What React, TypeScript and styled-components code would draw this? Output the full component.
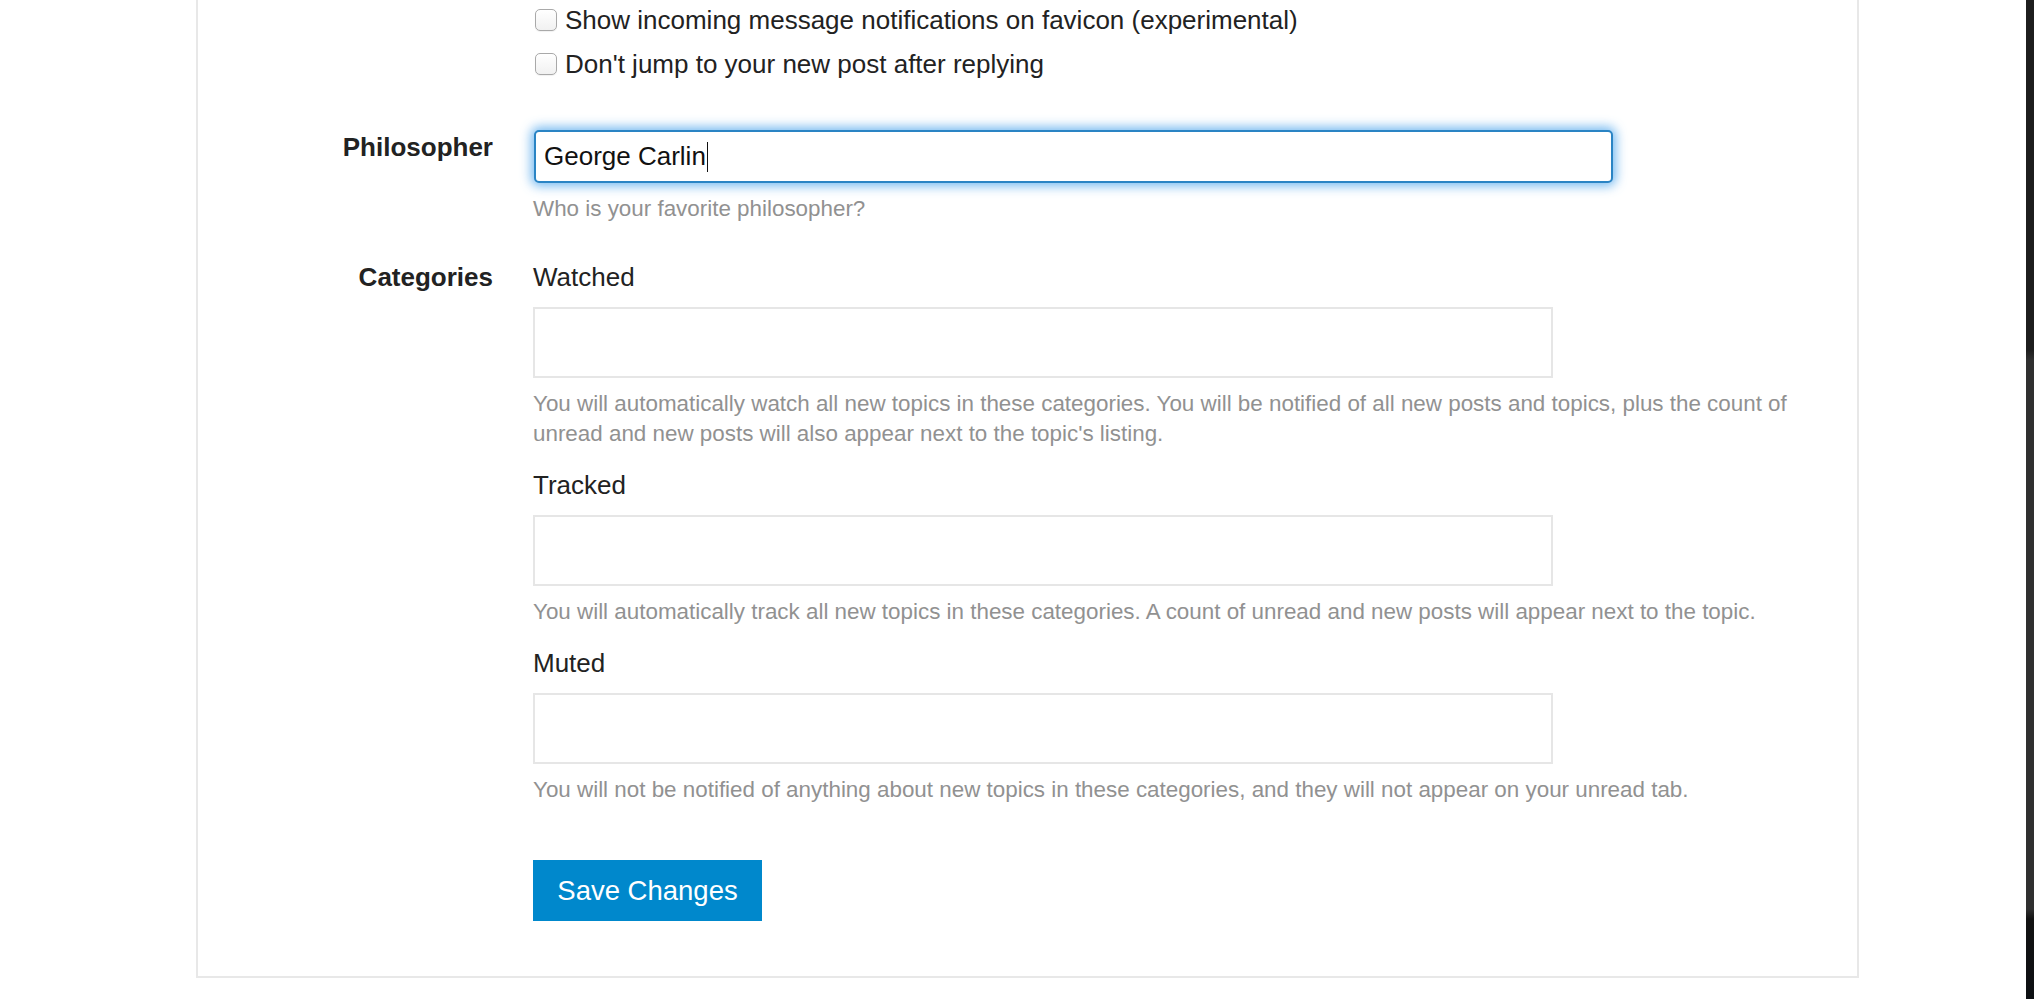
import React from "react";
import styled, { createGlobalStyle } from "styled-components";

const GlobalStyle = createGlobalStyle`
  html, body {
    margin: 0;
    padding: 0;
    background: #ffffff;
    font-family: "Liberation Sans", Arial, Helvetica, sans-serif;
    color: #222222;
  }
  * { box-sizing: border-box; }
`;

const Page = styled.div`
  display: flex;
  width: 2034px;
  height: 999px;
  overflow: hidden;
  background: #ffffff;
`;

const Main = styled.div`
  flex: 1;
  padding-left: 196px;
`;

const WindowEdge = styled.div`
  width: 8px;
  height: 999px;
  background: linear-gradient(
    to bottom,
    #1d1d1d 0%,
    #1d1d1d 35%,
    #2f2f2f 36%,
    #2f2f2f 91%,
    #121212 92%,
    #0d0f12 100%
  );
`;

const Card = styled.section`
  width: 1663px;
  border: 2px solid #e8e8e8;
  border-top: none;
  padding: 0 40px 55px 0;
  display: flex;
  flex-direction: column;
`;

const FieldRow = styled.div<{ $gap: number }>`
  display: grid;
  grid-template-columns: 295px 1fr;
  column-gap: 40px;
  margin-top: ${(p) => p.$gap}px;
`;

const FieldLabel = styled.div<{ $offset?: number }>`
  font-size: 26px;
  line-height: 30px;
  font-weight: 700;
  color: #222222;
  text-align: right;
  padding-top: ${(p) => p.$offset ?? 2}px;
`;

const Controls = styled.div`
  display: flex;
  flex-direction: column;
  align-items: flex-start;
`;

const CheckList = styled.div`
  display: flex;
  flex-direction: column;
  gap: 4px;
`;

const CheckRow = styled.label`
  display: flex;
  align-items: center;
  gap: 8px;
  height: 40px;
  font-size: 26px;
  color: #222222;
  padding-left: 2px;
`;

const CheckBox = styled.input.attrs({ type: "checkbox" })`
  appearance: none;
  -webkit-appearance: none;
  margin: 0;
  width: 22px;
  height: 22px;
  border: 1px solid #a9a9a9;
  border-radius: 5px;
  background: linear-gradient(#ffffff, #f1f1f1);
  box-shadow: inset 0 1px 0 #ffffff, 0 1px 1px rgba(0, 0, 0, 0.06);
`;

const TextField = styled.div`
  display: flex;
  align-items: center;
  width: 1079px;
  height: 53px;
  margin-left: 1px;
  padding: 0 8px;
  border: 2px solid #2a84c4;
  border-radius: 5px;
  background: #ffffff;
  box-shadow: 0 0 11px 3px rgba(82, 168, 236, 0.8);
  font-size: 26px;
  color: #111111;
`;

const Caret = styled.span`
  display: inline-block;
  width: 1.5px;
  height: 30px;
  background: #111111;
  margin-left: 1px;
`;

const HelpText = styled.p<{ $gap: number }>`
  margin: ${(p) => p.$gap}px 0 0;
  font-size: 22.4px;
  line-height: 30px;
  color: #919191;
`;

const SubLabel = styled.div<{ $gap: number }>`
  margin-top: ${(p) => p.$gap}px;
  font-size: 26px;
  line-height: 30px;
  color: #222222;
`;

const CategoryBox = styled.div`
  width: 1020px;
  height: 71px;
  margin-top: 15px;
  border: 2px solid #e6e6e6;
  background: #ffffff;
`;

const SaveButton = styled.button`
  height: 61px;
  width: 229px;
  padding: 0;
  border: none;
  border-radius: 0;
  background: #0088cc;
  color: #ffffff;
  font-family: "Liberation Sans", Arial, Helvetica, sans-serif;
  font-size: 27.5px;
  cursor: pointer;
`;

type Category = { label: string; help: string; gap: number };

const categories: Category[] = [
  {
    label: "Watched",
    gap: 0,
    help:
      "You will automatically watch all new topics in these categories. You will be notified of all new posts and topics, plus the count of unread and new posts will also appear next to the topic's listing.",
  },
  {
    label: "Tracked",
    gap: 21,
    help:
      "You will automatically track all new topics in these categories. A count of unread and new posts will appear next to the topic.",
  },
  {
    label: "Muted",
    gap: 21,
    help:
      "You will not be notified of anything about new topics in these categories, and they will not appear on your unread tab.",
  },
];

export default function App() {
  return (
    <>
      <GlobalStyle />
      <Page>
        <Main>
          <Card>
            <FieldRow $gap={0}>
              <div />
              <CheckList>
                <CheckRow>
                  <CheckBox />
                  Show incoming message notifications on favicon (experimental)
                </CheckRow>
                <CheckRow>
                  <CheckBox />
                  Don't jump to your new post after replying
                </CheckRow>
              </CheckList>
            </FieldRow>

            <FieldRow $gap={46}>
              <FieldLabel>Philosopher</FieldLabel>
              <Controls>
                <TextField>
                  <span>George Carlin</span>
                  <Caret />
                </TextField>
                <HelpText $gap={11}>Who is your favorite philosopher?</HelpText>
              </Controls>
            </FieldRow>

            <FieldRow $gap={38}>
              <FieldLabel $offset={0}>Categories</FieldLabel>
              <Controls>
                {categories.map((c) => (
                  <React.Fragment key={c.label}>
                    <SubLabel $gap={c.gap}>{c.label}</SubLabel>
                    <CategoryBox />
                    <HelpText $gap={11}>{c.help}</HelpText>
                  </React.Fragment>
                ))}
              </Controls>
            </FieldRow>

            <FieldRow $gap={55}>
              <div />
              <Controls>
                <SaveButton>Save Changes</SaveButton>
              </Controls>
            </FieldRow>
          </Card>
        </Main>
        <WindowEdge />
      </Page>
    </>
  );
}
